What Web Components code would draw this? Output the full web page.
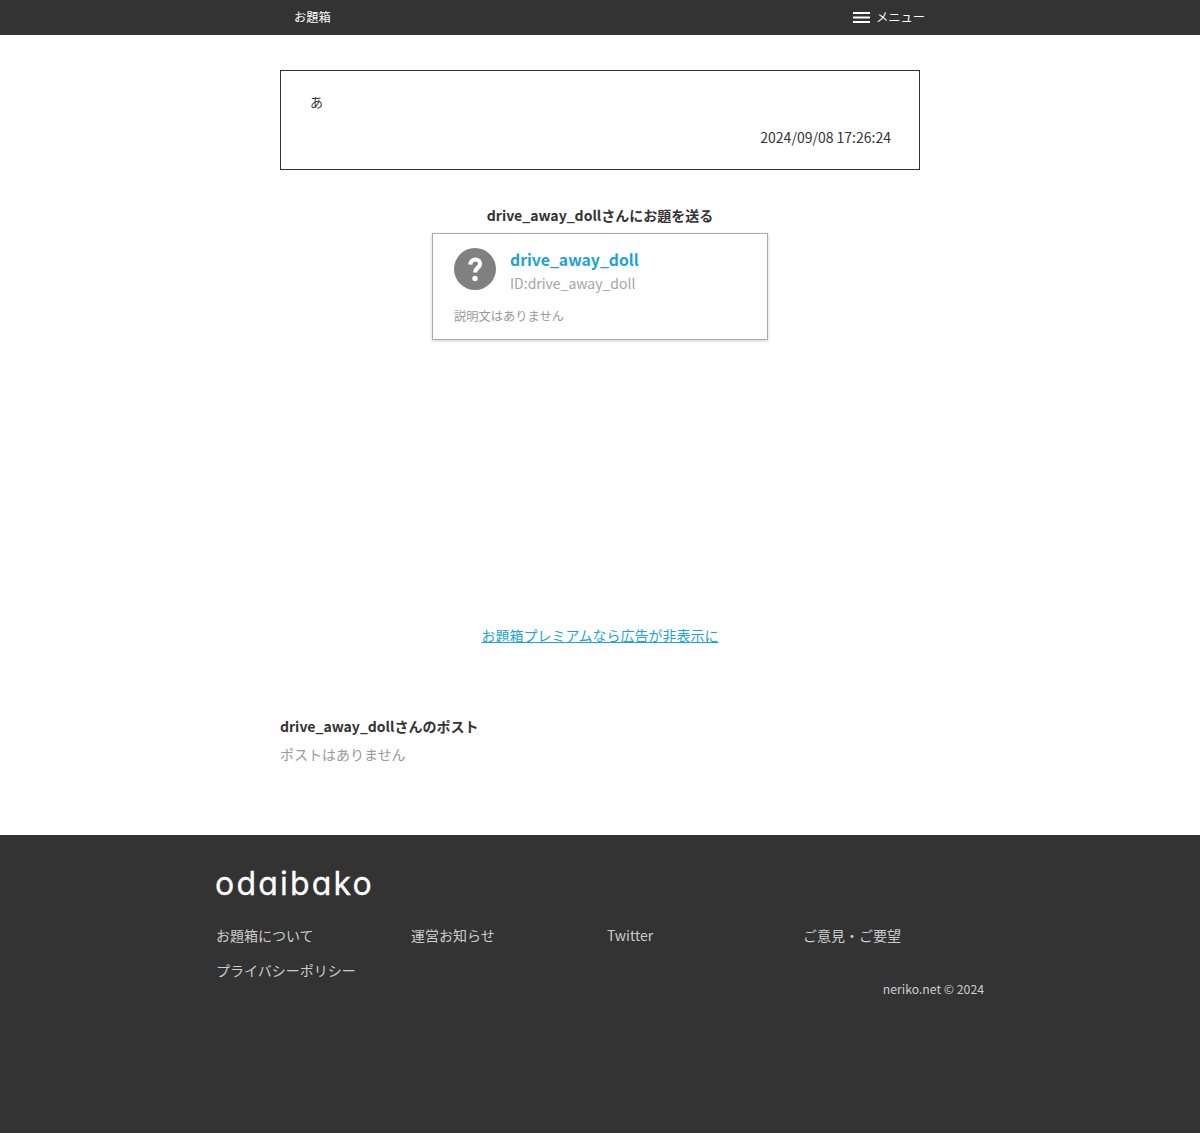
<!DOCTYPE html>
<html lang="ja">
<head>
<meta charset="utf-8">
<title>お題箱</title>
<style>
  html, body { margin: 0; padding: 0; background: #fff; }
  body { font-family: "Noto Sans CJK JP", "Noto Sans", sans-serif; color: #333; font-size: 14px; }
</style>
</head>
<body>
<site-header></site-header>
<main-column>
  <post-box text="あ" date="2024/09/08 17:26:24"></post-box>
  <send-section user="drive_away_doll"></send-section>
  <premium-link></premium-link>
  <post-list user="drive_away_doll"></post-list>
</main-column>
<site-footer></site-footer>

<script>
const headerTemplate = document.createElement("template");
headerTemplate.innerHTML = `
  <style>
    :host { display: block; height: 35px; background: #333; color: #fff; }
    .inner { width: 640px; height: 34px; margin: 0 auto; display: flex; align-items: center; justify-content: space-between; box-sizing: border-box; padding: 0 0 0 14px; font-size: 12.25px; }
    .menu { display: flex; align-items: center; gap: 6px; margin-right: -5px; }
    svg { display: block; position: relative; top: 0.5px; }
  </style>
  <div class="inner">
    <span>お題箱</span>
    <span class="menu">
      <svg width="17" height="11" viewBox="0 0 17 11"><path d="M0 1h17M0 5.500h17M0 10h17" stroke="#fff" stroke-width="2" fill="none"/></svg>
      <span>メニュー</span>
    </span>
  </div>
`;
class SiteHeader extends HTMLElement {
  constructor() {
    super();
    this.attachShadow({ mode: "open" });
    this.shadowRoot.appendChild(headerTemplate.content.cloneNode(true));
  }
}

const columnTemplate = document.createElement("template");
columnTemplate.innerHTML = `
  <style>
    :host { display: block; width: 640px; margin: 0 auto; height: 800px; padding-top: 35px; box-sizing: border-box; }
  </style>
  <slot></slot>
`;
class MainColumn extends HTMLElement {
  constructor() {
    super();
    this.attachShadow({ mode: "open" });
    this.shadowRoot.appendChild(columnTemplate.content.cloneNode(true));
  }
}

const postTemplate = document.createElement("template");
postTemplate.innerHTML = `
  <style>
    :host { display: block; height: 100px; border: 1px solid #333; box-sizing: border-box; padding: 20px 28px 0 29px; }
    .text { font-size: 13px; line-height: 22px; }
    .date { text-align: right; font-size: 14px; line-height: 20px; margin-top: 14px; }
  </style>
  <div class="text"></div>
  <div class="date"></div>
`;
class PostBox extends HTMLElement {
  constructor() {
    super();
    this.attachShadow({ mode: "open" });
    this.shadowRoot.appendChild(postTemplate.content.cloneNode(true));
    this.shadowRoot.querySelector(".text").textContent = this.getAttribute("text");
    this.shadowRoot.querySelector(".date").textContent = this.getAttribute("date");
  }
}

const sendTemplate = document.createElement("template");
sendTemplate.innerHTML = `
  <style>
    :host { display: block; margin-top: 35px; }
    h2 { margin: 0; height: 28px; font-size: 14px; line-height: 20px; font-weight: 700; text-align: center; }
    .card { width: 336px; height: 107px; margin: 0 auto; box-sizing: border-box; border: 1px solid #aaa; box-shadow: 0 1px 3px rgba(0,0,0,.2); padding: 14px 21px 0; background: #fff; }
    .top { display: flex; gap: 14px; }
    svg { display: block; flex: none; }
    .name { font-size: 15.75px; line-height: 24px; font-weight: 700; color: #1fa3d3; }
    .id { font-size: 14px; line-height: 24px; margin-top: -1px; color: #a5a5a5; }
    .desc { margin-top: 12px; font-size: 12.25px; line-height: 18px; color: #999; }
  </style>
  <h2></h2>
  <div class="card">
    <div class="top">
      <svg width="42" height="42" viewBox="0 0 42 42">
        <circle cx="21" cy="21" r="21" fill="#808080"/>
        <path d="M16.300 16.600c.2-3 2.200-5.100 5-5.100 2.800 0 4.800 1.800 4.800 4.300 0 2-1.200 3.100-2.600 4.200-1.500 1.200-2.400 2.300-2.400 4.500" stroke="#fff" stroke-width="4.200" fill="none"/>
        <circle cx="21" cy="30.500" r="2.700" fill="#fff"/>
      </svg>
      <div>
        <div class="name"></div>
        <div class="id"></div>
      </div>
    </div>
    <div class="desc">説明文はありません</div>
  </div>
`;
class SendSection extends HTMLElement {
  constructor() {
    super();
    this.attachShadow({ mode: "open" });
    this.shadowRoot.appendChild(sendTemplate.content.cloneNode(true));
    const user = this.getAttribute("user");
    this.shadowRoot.querySelector("h2").textContent = user + "さんにお題を送る";
    this.shadowRoot.querySelector(".name").textContent = user;
    this.shadowRoot.querySelector(".id").textContent = "ID:" + user;
  }
}

const premiumTemplate = document.createElement("template");
premiumTemplate.innerHTML = `
  <style>
    :host { display: block; margin-top: 285px; text-align: center; font-size: 14px; line-height: 20px; }
    a { color: #1fa3d3; }
  </style>
  <a href="#">お題箱プレミアムなら広告が非表示に</a>
`;
class PremiumLink extends HTMLElement {
  constructor() {
    super();
    this.attachShadow({ mode: "open" });
    this.shadowRoot.appendChild(premiumTemplate.content.cloneNode(true));
  }
}

const listTemplate = document.createElement("template");
listTemplate.innerHTML = `
  <style>
    :host { display: block; margin-top: 71px; }
    h3 { margin: 0; font-size: 14px; line-height: 20px; font-weight: 700; }
    p { margin: 8px 0 0; font-size: 14px; line-height: 20px; color: #999; }
  </style>
  <h3></h3>
  <p>ポストはありません</p>
`;
class PostList extends HTMLElement {
  constructor() {
    super();
    this.attachShadow({ mode: "open" });
    this.shadowRoot.appendChild(listTemplate.content.cloneNode(true));
    this.shadowRoot.querySelector("h3").textContent = this.getAttribute("user") + "さんのポスト";
  }
}

const footerTemplate = document.createElement("template");
footerTemplate.innerHTML = `
  <style>
    :host { display: block; height: 298px; background: #333; color: #ccc; overflow: hidden; }
    .inner { width: 770px; margin: 0 auto; padding-top: 26px; }
    .logo { font-family: "Inter", sans-serif; font-feature-settings: "cv11"; font-weight: 400; font-size: 32px; line-height: 46px; letter-spacing: 2.2px; color: #fff; -webkit-text-stroke: 0.3px #fff; }
    .links { display: grid; grid-template-columns: 195px repeat(3, 196px); grid-auto-rows: 35px; margin-top: 11px; margin-left: 1px; font-size: 14px; line-height: 35px; }
    a { color: inherit; text-decoration: none; white-space: nowrap; }
    .copy { text-align: right; font-size: 12.25px; line-height: 18px; margin-top: -8px; margin-right: 1px; }
  </style>
  <div class="inner">
    <div class="logo">odaibako</div>
    <div class="links">
      <a href="#">お題箱について</a>
      <a href="#">運営お知らせ</a>
      <a href="#">Twitter</a>
      <a href="#">ご意見・ご要望</a>
      <a href="#">プライバシーポリシー</a>
    </div>
    <div class="copy">neriko.net © 2024</div>
  </div>
`;
class SiteFooter extends HTMLElement {
  constructor() {
    super();
    this.attachShadow({ mode: "open" });
    this.shadowRoot.appendChild(footerTemplate.content.cloneNode(true));
  }
}

window.customElements.define("site-header", SiteHeader);
window.customElements.define("main-column", MainColumn);
window.customElements.define("post-box", PostBox);
window.customElements.define("send-section", SendSection);
window.customElements.define("premium-link", PremiumLink);
window.customElements.define("post-list", PostList);
window.customElements.define("site-footer", SiteFooter);
</script>
</body>
</html>
